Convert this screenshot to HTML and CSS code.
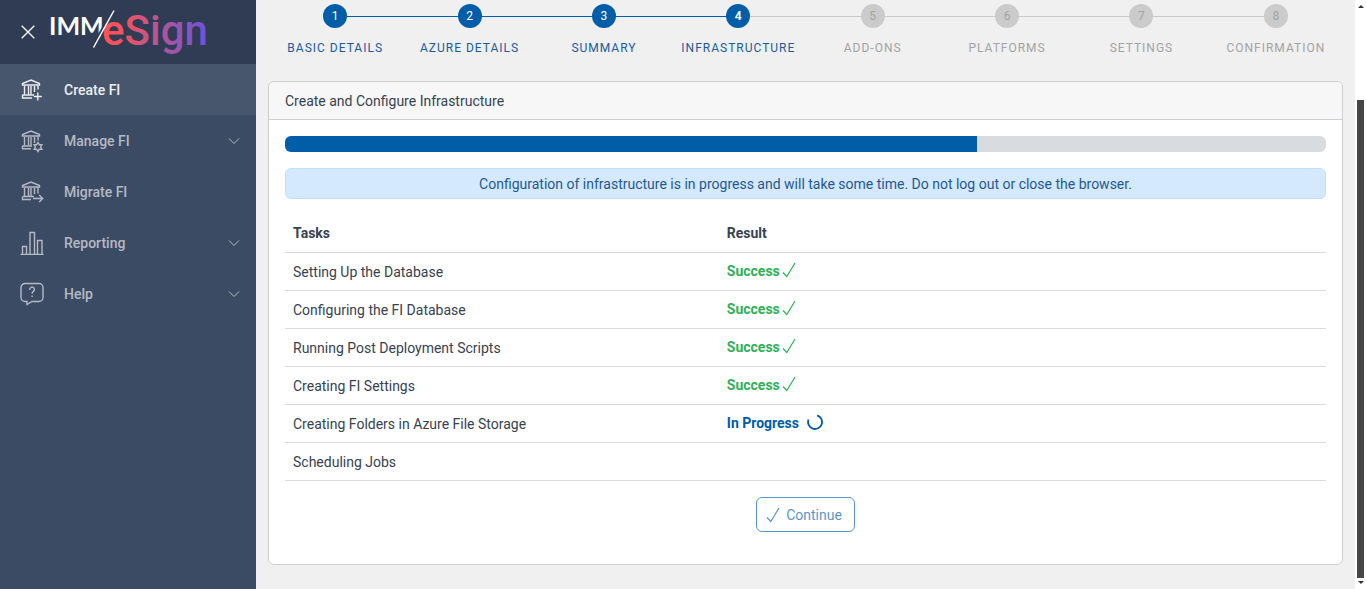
FILE: index.html
```html
<!DOCTYPE html>
<html lang="en">
<head>
<meta charset="utf-8">
<meta name="viewport" content="width=device-width, initial-scale=1">
<title>IMM/eSign - Create FI</title>
<link rel="stylesheet" href="styles.css">
</head>
<body>
<svg class="defs" width="0" height="0" aria-hidden="true">
  <defs>
    <symbol id="bank" viewBox="0 0 24 24">
      <path d="M2.500 7V5.500L11 2l8.500 3.500V7zM4.500 8v8.500M8.500 8v8.500M11 8v8.500M14.500 8v6"/>
    </symbol>
    <symbol id="check" viewBox="0 0 14 16">
      <path d="M1 10.500L4.800 14.500L13 1"/>
    </symbol>
    <symbol id="chevron" viewBox="0 0 12 8">
      <path d="M1 1.500l5 5 5-5"/>
    </symbol>
  </defs>
</svg>
<div class="app">
  <aside class="sidebar">
    <header class="brand">
      <button class="close" type="button" aria-label="Close menu">
        <svg viewBox="0 0 14 14" width="14" height="14"><path d="M.7.7l12.600 12.600M13.300.7L.7 13.300"/></svg>
      </button>
      <svg class="logo" width="160" height="56" viewBox="0 0 160 56" role="img" aria-label="IMM eSign">
        <defs>
          <linearGradient id="logo-fill" gradientUnits="userSpaceOnUse" x1="54" y1="30" x2="156" y2="30">
            <stop offset="0" stop-color="#ff5156"/>
            <stop offset=".2" stop-color="#f4525f"/>
            <stop offset=".5" stop-color="#bd558f"/>
            <stop offset=".75" stop-color="#9455b4"/>
            <stop offset="1" stop-color="#6b54d8"/>
          </linearGradient>
        </defs>
        <text class="logo-imm" x="-1" y="35">IMM</text>
        <path class="logo-gap" d="M43.500 47.500L64 10.500"/>
        <text class="logo-esign" x="52" y="45">eSign</text>
        <path class="logo-slash" d="M43.500 47.500L64 10.500"/>
      </svg>
    </header>
    <nav>
      <ul class="menu">
        <li><a class="item active" href="#">
          <svg class="icon" viewBox="0 0 24 24"><use href="#bank"/><path d="M18 7.500v4M3 17h11M2.500 16.500v3.500H12M17.800 14.500v8M13.800 18.500h8"/></svg>
          <span>Create FI</span></a></li>
        <li><a class="item" href="#">
          <svg class="icon" viewBox="0 0 24 24"><use href="#bank"/><path d="M18 7.500v4M3 17h9M2.500 16.500v3.200H11"/><path d="M18 13.500l1.300 2.200 2.600 0-1.300 2.300 1.300 2.300-2.600 0L18 22.500l-1.300-2.200-2.600 0 1.300-2.300-1.300-2.300 2.600 0z"/></svg>
          <span>Manage FI</span>
          <svg class="chevron" viewBox="0 0 12 8"><use href="#chevron"/></svg></a></li>
        <li><a class="item" href="#">
          <svg class="icon" viewBox="0 0 24 24"><use href="#bank"/><path d="M18 7.500v6M3 16.500h11M2.500 16.500v3h8.500M13 18.500h9.500M19.200 15l3.500 3.500-3.500 3.500"/></svg>
          <span>Migrate FI</span></a></li>
        <li><a class="item" href="#">
          <svg class="icon" viewBox="0 0 24 24"><path d="M.5 23.500h23M2.500 23v-7.500h4V23M10 23V1.500h4.500V23M17.500 23V9.500h4.500V23"/></svg>
          <span>Reporting</span>
          <svg class="chevron" viewBox="0 0 12 8"><use href="#chevron"/></svg></a></li>
        <li><a class="item" href="#">
          <svg class="icon" viewBox="0 0 24 24"><path d="M5 1.500h14a4 4 0 0 1 4 4v10a4 4 0 0 1-4 4h-7l-5 3v-3H5a4 4 0 0 1-4-4v-10a4 4 0 0 1 4-4z"/><path d="M9.800 8V7.500a2.300 2.300 0 1 1 3.600 1.800c-1 .7-1.300 1.200-1.300 2.500M12.100 13.600v1.500"/></svg>
          <span>Help</span>
          <svg class="chevron" viewBox="0 0 12 8"><use href="#chevron"/></svg></a></li>
      </ul>
    </nav>
  </aside>

  <main class="content">
    <ol class="steps">
      <li class="step done"><span class="dot">1</span><span class="label">Basic Details</span></li>
      <li class="step done"><span class="dot">2</span><span class="label">Azure Details</span></li>
      <li class="step done"><span class="dot">3</span><span class="label">Summary</span></li>
      <li class="step done current"><span class="dot">4</span><span class="label">Infrastructure</span></li>
      <li class="step"><span class="dot">5</span><span class="label">Add-ons</span></li>
      <li class="step"><span class="dot">6</span><span class="label">Platforms</span></li>
      <li class="step"><span class="dot">7</span><span class="label">Settings</span></li>
      <li class="step"><span class="dot">8</span><span class="label">Confirmation</span></li>
    </ol>

    <section class="card">
      <h1 class="card-title">Create and Configure Infrastructure</h1>
      <div class="card-body">
        <div class="progress" role="progressbar" aria-label="Configuration progress" aria-valuemin="0" aria-valuemax="100" aria-valuenow="66"><div class="bar" style="width: 66.5%"></div></div>
        <p class="alert">Configuration of infrastructure is in progress and will take some time. Do not log out or close the browser.</p>
        <table class="tasks">
          <thead><tr><th scope="col" class="col-task">Tasks</th><th scope="col">Result</th></tr></thead>
          <tbody>
            <tr><td>Setting Up the Database</td><td><span class="result success">Success<svg class="check" viewBox="0 0 14 16"><use href="#check"/></svg></span></td></tr>
            <tr><td>Configuring the FI Database</td><td><span class="result success">Success<svg class="check" viewBox="0 0 14 16"><use href="#check"/></svg></span></td></tr>
            <tr><td>Running Post Deployment Scripts</td><td><span class="result success">Success<svg class="check" viewBox="0 0 14 16"><use href="#check"/></svg></span></td></tr>
            <tr><td>Creating FI Settings</td><td><span class="result success">Success<svg class="check" viewBox="0 0 14 16"><use href="#check"/></svg></span></td></tr>
            <tr><td>Creating Folders in Azure File Storage</td><td><span class="result running">In Progress<svg class="spinner" viewBox="0 0 16 16"><path d="M10.200 1.300A7 7 0 1 1 1.500 5.500"/></svg></span></td></tr>
            <tr><td>Scheduling Jobs</td><td></td></tr>
          </tbody>
        </table>
        <button class="continue" type="button" disabled><svg class="check" viewBox="0 0 14 16"><use href="#check"/></svg>Continue</button>
      </div>
    </section>
  </main>

  <div class="scroll" aria-hidden="true">
    <span class="arrow up"></span>
    <span class="thumb"></span>
    <span class="arrow down"></span>
  </div>
</div>
</body>
</html>
```
FILE: styles.css
```css
* { box-sizing: border-box; }

body {
  margin: 0;
  background: #f0f0f0;
  color: #37424f;
  font: 14px/21px Roboto, "Liberation Sans", sans-serif;
}

.defs { display: block; }
svg { fill: none; stroke: currentColor; flex: none; }

.app { display: flex; min-height: 100vh; }

/* Sidebar */
.sidebar { flex: 0 0 256px; background: #3c4b64; color: #b4bac4; }
.brand { display: flex; align-items: center; height: 64px; padding-left: 21px; background: #303c54; }
.close { display: flex; padding: 0; border: 0; background: none; color: #fff; }
.close svg { stroke-width: 1.3; }
.logo { align-self: flex-start; margin-left: 15px; overflow: visible; }
.logo text { stroke: none; }
.logo .logo-imm { fill: #fff; font: 700 25px Lato, sans-serif; }
.logo .logo-esign { fill: url(#logo-fill); font: 500 42px Roboto, sans-serif; }
.logo-gap { stroke: #303c54; stroke-width: 5; }
.logo-slash { stroke: #fff; stroke-width: 1.5; }

.menu { margin: 0; padding: 0; list-style: none; }
.item {
  display: flex;
  align-items: center;
  height: 51px;
  padding: 0 16px 0 20px;
  gap: 20px;
  color: inherit;
  font-weight: 500;
  text-decoration: none;
}
.item span { padding-top: 2px; }
.item.active { background: #48566d; color: #eceef1; }
.icon { width: 24px; height: 24px; stroke-width: 1.4; }
.chevron { width: 12px; height: 8px; margin-left: auto; }

/* Content */
.content { flex: 1; min-width: 0; padding: 0 12px 24px; }

.steps { display: flex; margin: 0; padding: 4px 0 23px; list-style: none; }
.step {
  position: relative;
  display: flex;
  flex: 1 1 0;
  flex-direction: column;
  align-items: center;
  gap: 10px;
  color: #a3a3a3;
}
.step::before {
  content: "";
  position: absolute;
  top: 12px;
  left: -50%;
  width: 100%;
  height: 1px;
  background: #c9c9c9;
}
.step:first-child::before { display: none; }
.step.done::before { background: #005da8; }
.dot {
  position: relative;
  z-index: 1;
  width: 24px;
  height: 24px;
  border-radius: 50%;
  background: #cbcbcb;
  font-size: 12px;
  line-height: 25px;
  text-align: center;
}
.done .dot { background: #005da8; color: #fff; }
.current .dot { font-weight: 700; }
.label { font-size: 12px; line-height: 20px; letter-spacing: 1px; text-transform: uppercase; white-space: nowrap; }
.done .label { color: #1a5b9c; }

.card { border: 1px solid #cdced1; border-radius: 6px; background: #fff; }
.card-title {
  margin: 0;
  padding: 9px 16px 7px;
  border-bottom: 1px solid #cdced1;
  border-radius: 6px 6px 0 0;
  background: #f7f7f7;
  font-size: 14px;
  font-weight: 400;
}
.card-body { display: flex; flex-direction: column; padding: 16px 16px 32px; }
.progress { height: 16px; border-radius: 6px; background: #d8dbe0; overflow: hidden; }
.bar { height: 100%; background: #005da8; }
.alert {
  margin: 16px 0;
  padding: 5px 12px 3px;
  border: 1px solid #c0dffd;
  border-radius: 6px;
  background: #d5e9fe;
  color: #24588f;
  text-align: center;
}

.tasks { width: 100%; border-spacing: 0; table-layout: fixed; }
.tasks th, .tasks td { height: 38px; padding: 8px; border-bottom: 1px solid #d8dbe0; text-align: left; vertical-align: top; }
.tasks td:first-child { padding: 9px 8px 7px; }
.tasks th { font-weight: 700; }
.col-task { width: 41.67%; }
.result { display: flex; align-items: flex-start; font-weight: 700; }
.result svg { margin-top: 1px; }
.success { gap: 2px; color: #2eb157; }
.running { gap: 8px; color: #005da8; }
.check { width: 14px; height: 16px; stroke-width: 1.2; }
.spinner { width: 16px; height: 16px; stroke-width: 1.8; }

.continue {
  display: flex;
  align-items: center;
  align-self: center;
  gap: 6px;
  margin-top: 16px;
  padding: 7px 12px 5px 9px;
  border: 1px solid #005da8;
  border-radius: 6px;
  background: #fff;
  color: #005da8;
  font: inherit;
  opacity: .65;
}
.continue .check { margin-bottom: 2px; }

/* Scroll track */
.scroll {
  display: flex;
  flex: 0 0 11px;
  flex-direction: column;
  align-items: center;
  padding: 5px 0;
  background: #fff;
}
.thumb { flex: 1; width: 7px; margin: 92px 0 3px; background: #464646; }
.arrow { border: 3px solid transparent; }
.up { border-top: 0; border-bottom-color: #333; }
.down { border-bottom: 0; border-top-color: #333; }
```
